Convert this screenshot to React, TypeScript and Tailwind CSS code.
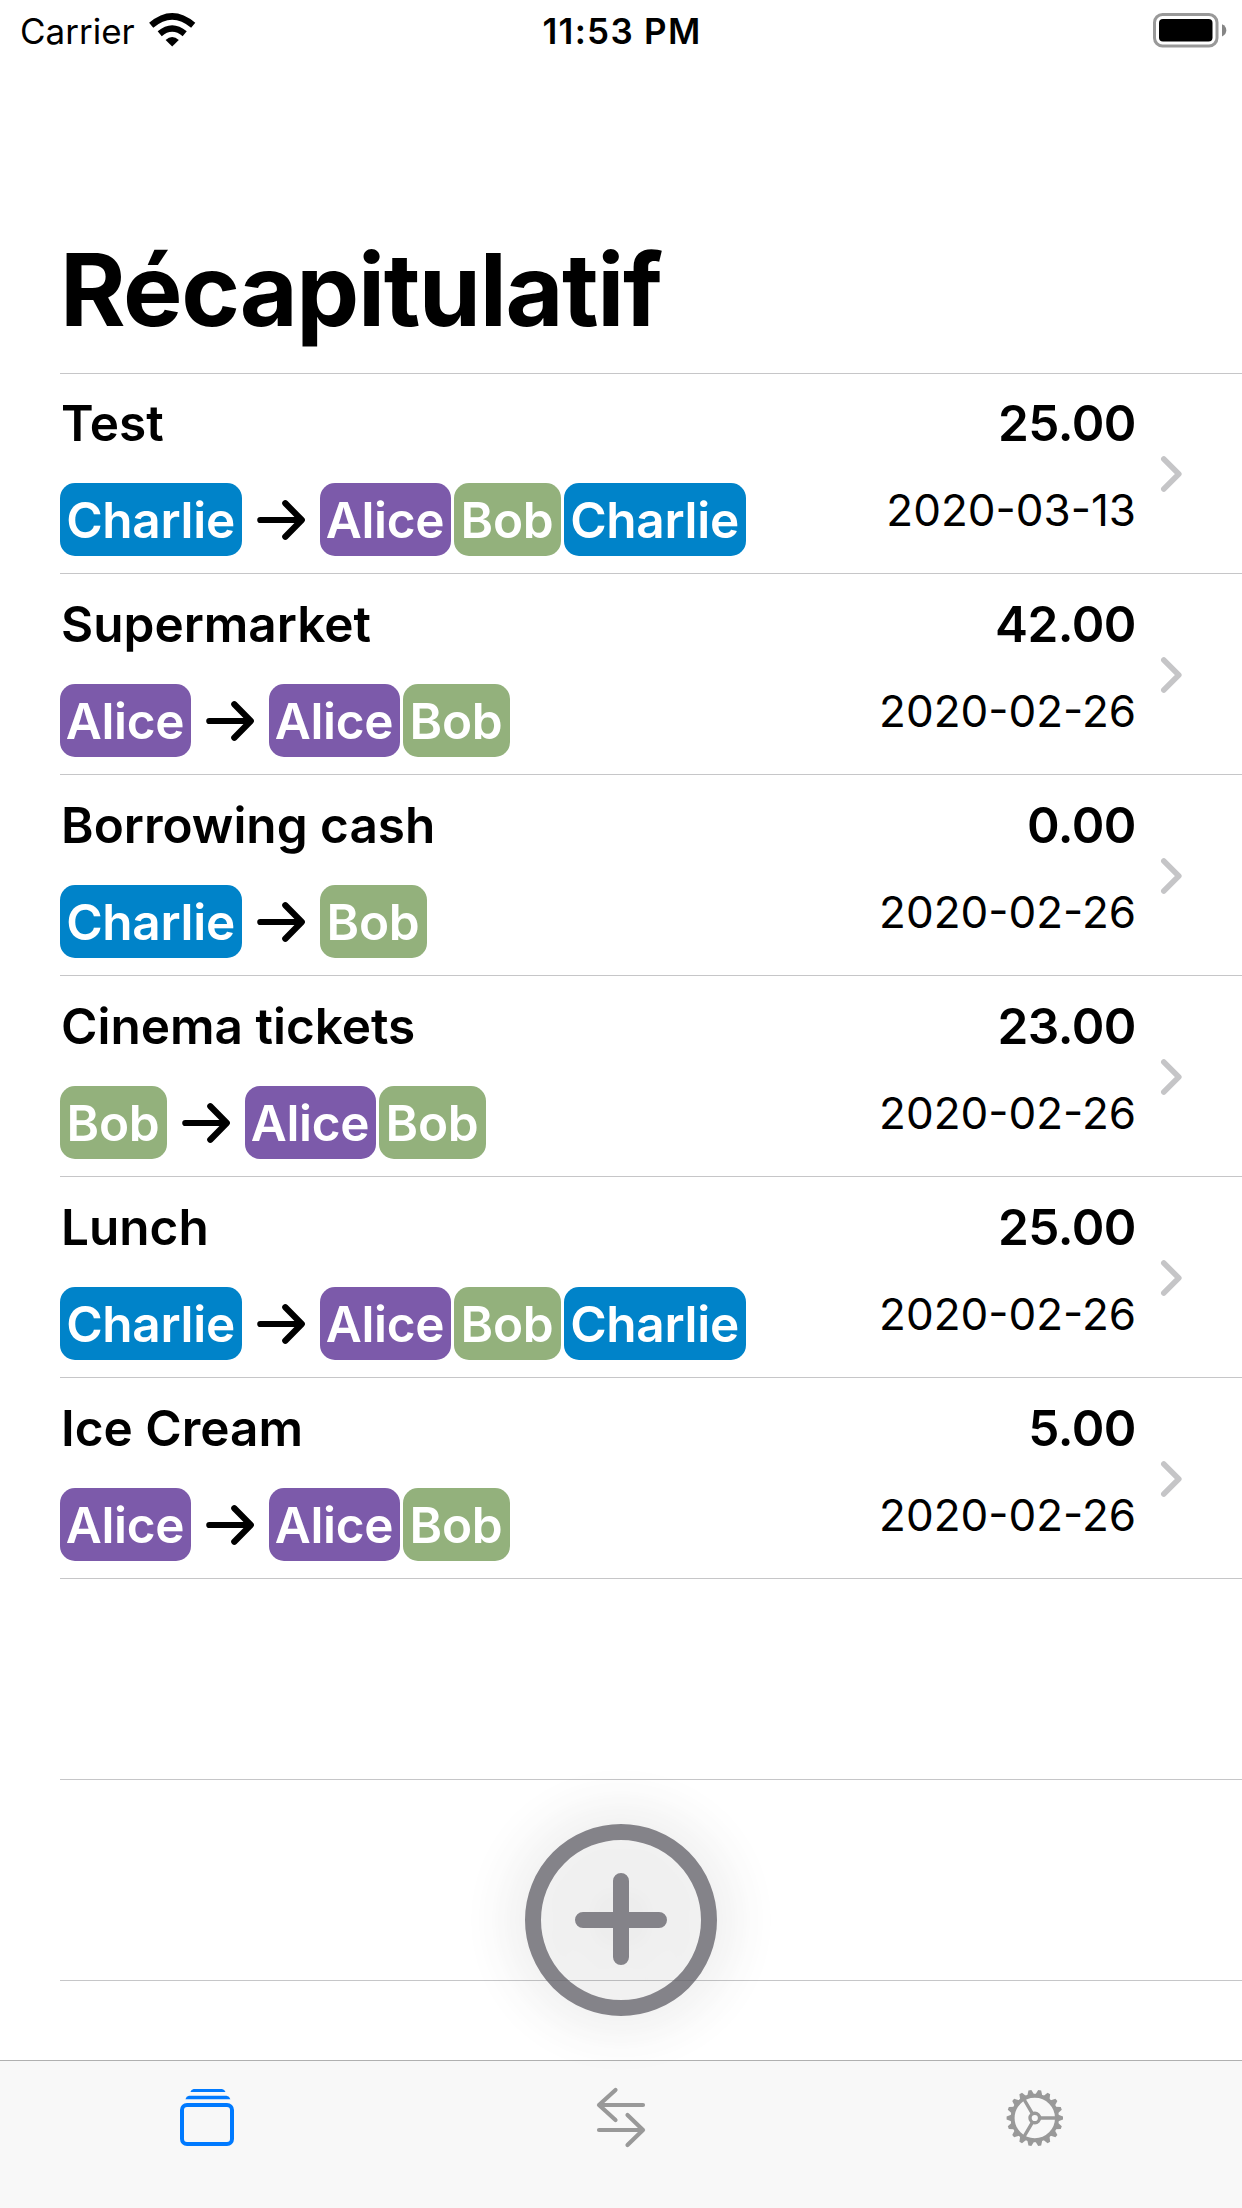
type Person = "Alice" | "Bob" | "Charlie";

interface Expense {
  title: string;
  amount: string;
  date: string;
  from: Person;
  to: Person[];
}

const expenses: Expense[] = [
  { title: "Test", amount: "25.00", date: "2020-03-13", from: "Charlie", to: ["Alice", "Bob", "Charlie"] },
  { title: "Supermarket", amount: "42.00", date: "2020-02-26", from: "Alice", to: ["Alice", "Bob"] },
  { title: "Borrowing cash", amount: "0.00", date: "2020-02-26", from: "Charlie", to: ["Bob"] },
  { title: "Cinema tickets", amount: "23.00", date: "2020-02-26", from: "Bob", to: ["Alice", "Bob"] },
  { title: "Lunch", amount: "25.00", date: "2020-02-26", from: "Charlie", to: ["Alice", "Bob", "Charlie"] },
  { title: "Ice Cream", amount: "5.00", date: "2020-02-26", from: "Alice", to: ["Alice", "Bob"] },
];

const chipStyles: Record<Person, string> = {
  Alice: "w-[131px] bg-[#7c5aaa]",
  Bob: "w-[107px] bg-[#93b17c]",
  Charlie: "w-[182px] bg-[#0083c9]",
};

function Chip({ name }: { name: Person }) {
  return (
    <span
      className={`flex h-[73px] shrink-0 justify-center rounded-[15px] pr-px text-[49.5px] leading-[75px] font-semibold tracking-[-0.3px] text-white ${chipStyles[name]}`}
    >
      {name}
    </span>
  );
}

function ArrowRight() {
  return (
    <svg className="mx-[15px] h-[73px] w-12 shrink-0" viewBox="0 0 48 73" fill="none" stroke="#000" strokeWidth="6.2" strokeLinecap="round" strokeLinejoin="round">
      <path d="M3.3 37H44.5M28.3 20.3L44.8 37L28.3 53.7" />
    </svg>
  );
}

function ExpenseRow({ expense }: { expense: Expense }) {
  return (
    <li className="ml-[60px] flex h-[201px] justify-between border-b border-[#c6c6c8] first:h-[200px]">
      <div className="flex flex-col justify-end pb-[17px]">
        <h2 className="mb-[30px] ml-px text-[49.5px] leading-[60px] font-semibold">{expense.title}</h2>
        <div className="flex">
          <Chip name={expense.from} />
          <ArrowRight />
          <div className="flex gap-[3px]">
            {expense.to.map((p) => (
              <Chip key={p} name={p} />
            ))}
          </div>
        </div>
      </div>
      <div className="flex">
        <div className="flex flex-col items-end justify-end pb-[37px]">
          <span className="mb-[31px] text-[49.5px] leading-[60px] font-semibold tracking-[-0.5px]">{expense.amount}</span>
          <span className="text-[44px] leading-[52px]">{expense.date}</span>
        </div>
        <svg className="mt-px mr-[57px] ml-[22px] h-10 w-[27px] self-center" viewBox="0 0 27 40" fill="none" stroke="#c5c5c7" strokeWidth="5.6" strokeLinecap="round" strokeLinejoin="round">
          <path d="M5.8 5L20.8 20L5.8 35" />
        </svg>
      </div>
    </li>
  );
}

function StatusBar() {
  return (
    <header className="grid h-16 grid-cols-3 items-center text-[35px] leading-[62px]">
      <div className="-mt-[2px] flex items-center pl-5">
        <span>Carrier</span>
        <svg className="-mt-[3px] ml-[13px] h-9 w-12" viewBox="0 0 48 36" fill="none" stroke="#000" strokeWidth="6.4">
          <path d="M3.2 13.3Q24.2 -4.6 45.2 13.3" />
          <path d="M11.7 21.7Q24.2 11.2 36.7 21.7" />
          <path d="M24.2 34.5L17.6 27.9Q24.2 22.2 30.8 27.9Z" fill="#000" stroke="none" />
        </svg>
      </div>
      <span className="-mt-[2px] pl-[2px] text-center font-semibold tracking-[1.3px]">11:53 PM</span>
      <svg className="-mt-[4px] mr-[15px] h-9 w-[75px] justify-self-end" viewBox="0 0 75 36">
        <rect x="2.5" y="2.5" width="62.5" height="31.5" rx="8" fill="none" stroke="#999" strokeWidth="3" />
        <rect x="7" y="7" width="53.5" height="22.5" rx="4" />
        <path d="M70 12.2Q74.3 14 74.3 18.2Q74.3 22.5 70 24.4Z" fill="#858585" />
      </svg>
    </header>
  );
}

function AddButton() {
  return (
    <button
      aria-label="Ajouter"
      className="absolute top-[1824px] left-1/2 h-48 w-48 -translate-x-1/2 rounded-full opacity-75 drop-shadow-[0_0_30px_rgba(0,0,0,0.3)]"
    >
      <svg viewBox="0 0 192 192" fill="none" stroke="#5c5a62" strokeWidth="16" strokeLinecap="round">
        <circle cx="96" cy="96" r="88" />
        <path d="M96 57V133M58 96H134" />
      </svg>
    </button>
  );
}

const gearTeeth = Array.from({ length: 18 }, (_, i) => i * 20);

function TabBar() {
  return (
    <nav className="grid h-[148px] grid-cols-3 justify-items-center border-t border-[#b0b0b0] bg-[#f8f8f8] pt-[25px]">
      <svg className="size-16" viewBox="0 0 64 64" fill="none" stroke="#007aff" strokeWidth="4">
        <rect x="7" y="19" width="50" height="39" rx="5" />
        <path d="M18.6 3H47Q49.6 3.4 50.5 6H15.4Q16.2 3.4 18.6 3ZM14 9.8H51.5Q54.5 10.3 55.4 13.2H10.4Q11.3 10.3 14 9.8Z" fill="#007aff" stroke="none" />
      </svg>
      <svg className="size-16" viewBox="0 0 64 64" fill="none" stroke="#999" strokeWidth="4.2" strokeLinecap="round" strokeLinejoin="round">
        <path d="M54 19H10M26.5 4L10 19L26.5 34M10 44H54M38.5 29L54 44L38.5 59" />
      </svg>
      <svg className="size-16" viewBox="0 0 64 64" fill="none" stroke="#999" strokeWidth="4">
        <circle cx="31.8" cy="32" r="22.2" />
        <circle cx="31.8" cy="32" r="4.8" strokeWidth="3.4" />
        <path d="M37.3 32H53.3M29.1 27.2L20.8 13M29.1 36.8L20.8 51" strokeWidth="3.4" />
        {gearTeeth.map((a) => (
          <path key={a} d="M54.8 28.4L60 30.5V33.5L54.8 35.6Z" fill="#999" stroke="none" transform={`rotate(${a} 31.8 32)`} />
        ))}
      </svg>
    </nav>
  );
}

export default function App() {
  return (
    <div className="relative flex h-[2208px] w-[1242px] flex-col overflow-hidden bg-white font-[Inter,sans-serif] text-black">
      <StatusBar />
      <h1 className="ml-[60px] h-[310px] border-b border-[#c6c6c8] pt-[166px] text-[100px] leading-[120px] font-bold tracking-[-1.4px]">
        Récapitulatif
      </h1>
      <ul className="min-h-0 flex-1 overflow-hidden">
        {expenses.map((e) => (
          <ExpenseRow key={e.title} expense={e} />
        ))}
        <li className="ml-[60px] h-[201px] border-b border-[#c6c6c8]" />
        <li className="ml-[60px] h-[201px] border-b border-[#c6c6c8]" />
      </ul>
      <AddButton />
      <TabBar />
    </div>
  );
}
